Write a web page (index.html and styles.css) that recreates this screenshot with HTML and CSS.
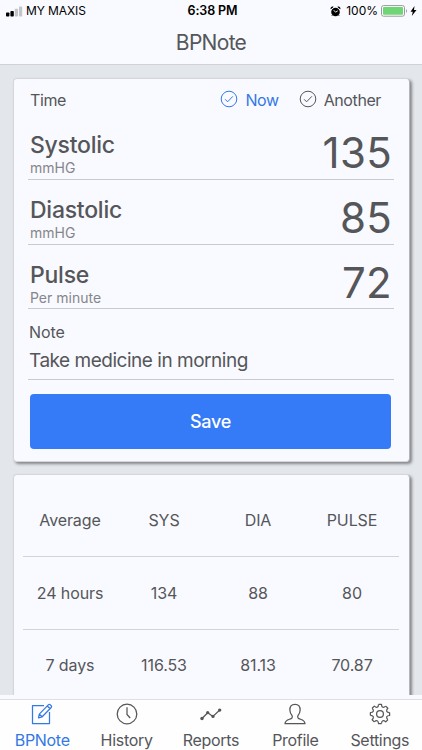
FILE: index.html
```html
<!DOCTYPE html>
<html lang="en">
<head>
<meta charset="utf-8">
<title>BPNote</title>
<link rel="stylesheet" href="styles.css">
</head>
<body>
<div class="app">
  <header class="header">
    <div class="status">
      <div class="status-side">
        <svg class="signal" width="17" height="11" viewBox="0 0 17 11"><rect x="0" y="6.5" width="3.4" height="4" rx=".8"/><rect x="4.4" y="5" width="3.4" height="5.5" rx=".8"/><g fill="#c4c5c8"><rect x="8.8" y="2.8" width="3.2" height="7.7" rx=".8"/><rect x="13" y=".6" width="3.2" height="9.9" rx=".8"/></g></svg>
        <span class="carrier">MY MAXIS</span>
      </div>
      <div class="clock">6:38 PM</div>
      <div class="status-side status-right">
        <svg class="alarm" width="11" height="11" viewBox="0 0 11 11"><circle cx="5.5" cy="6" r="4.3"/><path d="M.8 2.8A2 2 0 0 1 3.2.9zM10.2 2.8A2 2 0 0 0 7.8.9zM2.5 8.8l-.7 1.2M8.5 8.8l.7 1.2" stroke="#000" stroke-width=".7"/><path d="M3.8 4.2l1.7 2 2.3-1.4" fill="none" stroke="#fff" stroke-width=".9"/></svg>
        <span class="percent">100%</span>
        <svg width="27" height="12" viewBox="0 0 27 12"><rect x=".5" y=".6" width="23" height="10.6" rx="2" fill="#fff" stroke="#98999c"/><rect x="2" y="2.1" width="20" height="7.6" rx=".8" fill="#70d574"/><path d="M25 4q2 2 0 4z" fill="#98999c"/></svg>
        <svg class="bolt" width="7" height="10" viewBox="0 0 7 10"><path d="M4.5 0L.5 5.7h2.3L1.8 10l4.7-6H4z"/></svg>
      </div>
    </div>
    <h1 class="title">BPNote</h1>
  </header>

  <main class="content">
    <section class="card entry">
      <div class="time-row">
        <span class="time">Time</span>
        <span class="option active"><svg width="18" height="18" viewBox="0 0 18 18"><circle cx="9" cy="9" r="7.8"/><path d="M5.1 9.3l2.5 2.5 5.3-5.5"/></svg><span>Now</span></span>
        <span class="option"><svg width="18" height="18" viewBox="0 0 18 18"><circle cx="9" cy="9" r="7.8"/><path d="M5.1 9.3l2.5 2.5 5.3-5.5"/></svg><span>Another</span></span>
      </div>
      <div class="reading"><div><div class="name">Systolic</div><div class="unit">mmHG</div></div><div class="value">135</div></div>
      <div class="reading"><div><div class="name">Diastolic</div><div class="unit">mmHG</div></div><div class="value">85</div></div>
      <div class="reading last"><div><div class="name">Pulse</div><div class="unit">Per minute</div></div><div class="value">72</div></div>
      <div class="note">
        <div class="note-label">Note</div>
        <div class="note-text">Take medicine in morning</div>
      </div>
      <button class="save">Save</button>
    </section>

    <section class="card averages">
      <div class="row"><span>Average</span><span>SYS</span><span>DIA</span><span>PULSE</span></div>
      <div class="row"><span>24 hours</span><span>134</span><span>88</span><span>80</span></div>
      <div class="row final"><span>7 days</span><span>116.53</span><span>81.13</span><span>70.87</span></div>
    </section>
  </main>

  <nav class="tabs">
    <div class="tab active"><svg width="22" height="22" viewBox="0 0 22 22"><path d="M13 2.5H1.5v18h17V9"/><path d="M7.5 14.8l.8-3.7 9-9.2q1-1 2.1 0l.8.8q.8.9 0 1.8l-9 9.3zM16.3 3l2.9 2.8M8.3 11.1l2.9 2.7"/></svg><span>BPNote</span></div>
    <div class="tab"><svg width="22" height="22" viewBox="0 0 22 22"><circle cx="11" cy="11" r="9.8"/><path d="M11 4.2v7.3l3.2 3.5"/></svg><span>History</span></div>
    <div class="tab"><svg width="22" height="22" viewBox="0 0 22 22"><path d="M2 15.5l5.7-5.7 5.3 3.6 6.5-6.1"/><g class="dots"><circle cx="2" cy="15.5" r="1.7"/><circle cx="7.7" cy="9.6" r="1.6"/><circle cx="13" cy="13.4" r="1.6"/><circle cx="19.7" cy="7.1" r="1.7"/></g></svg><span>Reports</span></div>
    <div class="tab"><svg width="22" height="22" viewBox="0 0 22 22"><path d="M11 1.3C7.3 1.3 5.7 3.6 5.9 7.2c.1 2.6 1 4.1 2.1 5.3.6.8.3 2.6-.8 3.1-2.4 1.1-5.8.9-6.2 5.1h20c-.4-4.2-3.8-4-6.2-5.1-1.1-.5-1.4-2.3-.8-3.1 1.1-1.2 2-2.7 2.1-5.3.2-3.6-1.4-5.9-5.1-5.9z"/></svg><span>Profile</span></div>
    <div class="tab"><svg width="22" height="22" viewBox="-11 -11 22 22"><defs><path id="tooth" d="M9.6-1.5V1.5C6.4 1.6 5.66 3.39 7.85 5.73"/></defs><use href="#tooth"/><use href="#tooth" transform="rotate(45)"/><use href="#tooth" transform="rotate(90)"/><use href="#tooth" transform="rotate(135)"/><use href="#tooth" transform="rotate(180)"/><use href="#tooth" transform="rotate(225)"/><use href="#tooth" transform="rotate(270)"/><use href="#tooth" transform="rotate(315)"/><circle r="3.4"/></svg><span>Settings</span></div>
  </nav>
</div>
</body>
</html>
```
FILE: styles.css
```css
* { box-sizing: border-box; }

body {
  margin: 0;
  font-family: Inter, "Liberation Sans", sans-serif;
  color: #555659;
}

.app {
  display: flex;
  flex-direction: column;
  width: 422px;
  height: 750px;
  overflow: hidden;
  background: #f9faff;
}

svg { display: block; flex: none; }

.header {
  height: 65px;
  flex: none;
  border-bottom: 1px solid #d0d2d6;
}

.status {
  display: grid;
  grid-template-columns: 1fr auto 1fr;
  height: 22px;
  padding: 0 5px 0 6px;
  color: #000;
  line-height: 22px;
}

.status-side { display: flex; align-items: center; }
.status-right { justify-content: flex-end; }
.carrier { margin-left: 3px; font-size: 12px; letter-spacing: -0.1px; }
.clock { padding-left: 2px; font-size: 12.5px; font-weight: 600; letter-spacing: -0.1px; }
.percent { margin: 0 3px 0 5px; font-size: 12px; }
.bolt { margin-left: 2px; }

.title {
  margin: 0;
  font-size: 21px;
  font-weight: 400;
  line-height: 42px;
  letter-spacing: -0.7px;
  text-align: center;
}

.content {
  flex: none;
  height: 630px;
  overflow: hidden;
  padding: 13px 12px 0 13px;
  background: #e3e6ea;
}

.card {
  border: 1px solid #d5d6da;
  border-right-color: #b5b6ba;
  border-radius: 4px;
  background: #f9faff;
  box-shadow: 2px 2px 3px #85868a;
}

.entry {
  height: 384px;
  padding: 0 15px 0 14px;
}

.time-row {
  display: flex;
  align-items: center;
  height: 36px;
  padding: 6px 13px 0 2px;
  font-size: 16px;
  letter-spacing: -0.4px;
}

.time { margin-right: auto; }
.option { display: flex; align-items: center; gap: 7px; margin-left: 20px; }
.option svg { margin-top: -3px; fill: none; stroke: currentColor; stroke-width: 1; }
.active { color: #3478e5; }

.reading {
  display: flex;
  justify-content: space-between;
  height: 65px;
  padding: 16px 2px 0 2px;
  border-bottom: 1px solid #c9cad0;
}

.reading.last { height: 64px; }

.name { font-size: 23px; font-weight: 500; line-height: 28px; letter-spacing: -0.25px; }
.unit { font-size: 14px; line-height: 18px; color: #85868a; }
.value { font-size: 42px; line-height: 43px; letter-spacing: 0.3px; }

.note {
  height: 71px;
  padding: 12px 0 0 1px;
  border-bottom: 1px solid #c9cad0;
}

.note-label { font-size: 16px; line-height: 22px; letter-spacing: -0.1px; }
.note-text { font-size: 19px; line-height: 35px; letter-spacing: -0.48px; }

.save {
  display: block;
  width: 361px;
  height: 55px;
  margin: 14px 0 0 2px;
  padding: 0;
  border: 0;
  border-radius: 4px;
  background: #357af6;
  color: #fff;
  font: 500 18px/55px Inter, sans-serif;
  letter-spacing: -0.3px;
}

.averages {
  height: 300px;
  margin-top: 12px;
  padding: 9px 10px 0 9px;
}

.row {
  display: grid;
  grid-template-columns: repeat(4, 1fr);
  height: 73px;
  border-bottom: 1px solid #d3d4da;
  font-size: 16px;
  line-height: 72px;
  letter-spacing: -0.1px;
  text-align: center;
}

.row.final { line-height: 70px; }

.tabs {
  display: flex;
  flex: none;
  height: 51px;
  margin-top: 4px;
  border-top: 1px solid #dfe0e4;
  background: #fefeff;
}

.tab {
  display: flex;
  flex: 1;
  flex-direction: column;
  align-items: center;
  padding-top: 3px;
  font-size: 16px;
  line-height: 30px;
  letter-spacing: -0.3px;
}

.tab svg { fill: none; stroke: currentColor; stroke-width: 1.25; stroke-linejoin: round; }
.tab .dots { fill: currentColor; stroke: none; }
```
